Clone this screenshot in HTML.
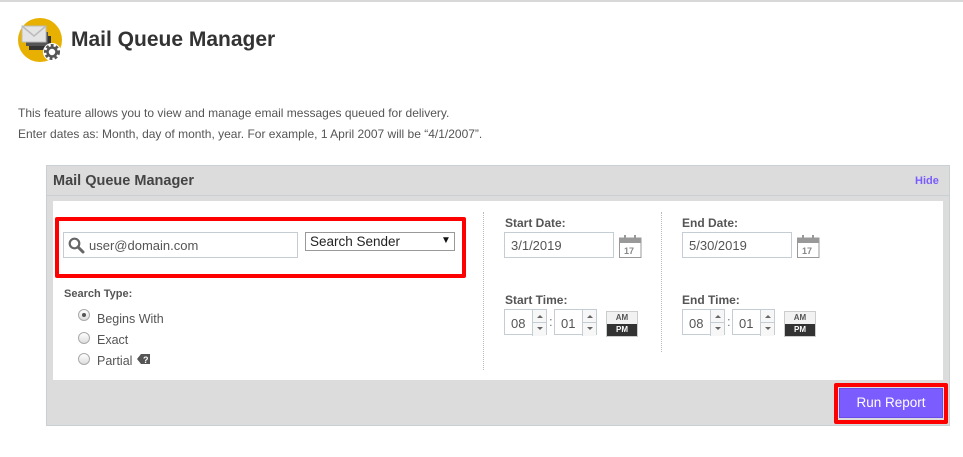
<!DOCTYPE html>
<html><head><meta charset="utf-8"><style>
*{box-sizing:border-box;margin:0;padding:0}
body{width:963px;height:457px;background:#fff;font-family:"Liberation Sans",Arial,sans-serif;position:relative;overflow:hidden;color:#444}
.a{position:absolute}
.lbl{font-size:12px;font-weight:bold;color:#555}
.inp{border:1px solid #c3cdd3;background:#fff;font-size:13px;color:#555}
.rad{width:12px;height:12px;border-radius:50%;border:1px solid #aaa;background:linear-gradient(#fff,#ddd)}
.rt{font-size:12.5px;color:#555}
.spin{border:1px solid #c3cdd3;background:#fff;height:26px}
.ar{border-left:1px solid #c3cdd3;width:14px;height:26px;right:0;top:0;position:absolute;background:#f7f7f7}
.ar:after{content:"";position:absolute;left:0;right:0;top:12px;border-top:1px solid #c3cdd3}
.up{position:absolute;left:4px;top:5px;border:3px solid transparent;border-bottom:3px solid #666;border-top:0}
.dn{position:absolute;left:4px;top:17px;border:3px solid transparent;border-top:3px solid #666;border-bottom:0}
</style></head><body>
<div class="a" style="left:0;top:0;width:963px;height:2px;background:#d8d8d8"></div>
<svg class="a" style="left:18px;top:16px" width="46" height="48" viewBox="0 0 46 48">
<circle cx="22" cy="24" r="22" fill="#e8b000"/>
<rect x="11" y="20" width="22" height="14" fill="#333"/>
<rect x="8" y="16" width="22" height="14" fill="#555"/>
<rect x="4" y="10" width="24" height="16" fill="#e4e4e4" stroke="#bbb"/>
<path d="M4 10 L16 20 L28 10" fill="none" stroke="#bbb" stroke-width="1.5"/>
<circle cx="34" cy="36" r="9" fill="#fff"/>
<circle cx="34" cy="36" r="6" fill="none" stroke="#555" stroke-width="4" stroke-dasharray="2.5 2"/>
<circle cx="34" cy="36" r="4.5" fill="none" stroke="#555" stroke-width="2.5"/>
</svg>
<div class="a" style="left:71px;top:28px;font-size:21px;font-weight:bold;color:#333">Mail Queue Manager</div>
<div class="a" style="left:18px;top:103px;font-size:12px;color:#555;line-height:21px">This feature allows you to view and manage email messages queued for delivery.<br>Enter dates as: Month, day of month, year. For example, 1 April 2007 will be “4/1/2007”.</div>

<div class="a" style="left:46px;top:165px;width:904px;height:261px;background:#dcdcdc;border:1px solid #c9d0d4"></div>
<div class="a" style="left:47px;top:195px;width:902px;height:1px;background:#c9d0d4"></div>
<div class="a" style="left:53px;top:173px;font-size:14.5px;font-weight:bold;color:#444">Mail Queue Manager</div>
<div class="a" style="left:915px;top:175px;font-size:11px;font-weight:bold;color:#7b5cff">Hide</div>
<div class="a" style="left:53px;top:201px;width:890px;height:179px;background:#fff"></div>

<div class="a" style="left:55px;top:217px;width:411px;height:61px;border:4px solid #f00;border-radius:2px"></div>
<div class="a inp" style="left:63px;top:232px;width:235px;height:26px"></div>
<svg class="a" style="left:68px;top:237px" width="17" height="17" viewBox="0 0 17 17"><circle cx="6.5" cy="6.5" r="4.8" fill="none" stroke="#666" stroke-width="2.2"/><path d="M10 10 L15 15" stroke="#666" stroke-width="3" stroke-linecap="round"/></svg>
<div class="a" style="left:89px;top:238px;font-size:13px;color:#555">user@domain.com</div>
<div class="a" style="left:305px;top:232px;width:150px;height:19px;border:1px solid #999;background:#fff"></div>
<div class="a" style="left:310px;top:234px;font-size:13.5px;color:#222">Search Sender</div>
<div class="a" style="left:441px;top:235px;font-size:10px;color:#111">▼</div>

<div class="a lbl" style="left:64px;top:288px;font-size:11px">Search Type:</div>
<div class="a rad" style="left:78px;top:309px"></div><div class="a" style="left:82px;top:313px;width:4px;height:4px;border-radius:50%;background:#555"></div>
<div class="a rt" style="left:97px;top:312px">Begins With</div>
<div class="a rad" style="left:78px;top:332px"></div><div class="a rt" style="left:97px;top:333px">Exact</div>
<div class="a rad" style="left:78px;top:353px"></div><div class="a rt" style="left:97px;top:354px">Partial</div>
<svg class="a" style="left:137px;top:353px" width="13" height="12" viewBox="0 0 13 12"><path d="M0 6 L4 1 H13 V11 H4 Z" fill="#555"/><text x="6" y="10" font-size="9" font-weight="bold" fill="#fff" font-family="Liberation Sans">?</text></svg>

<div class="a" style="left:483px;top:212px;height:158px;border-left:1px dotted #bbb"></div>
<div class="a" style="left:661px;top:212px;height:140px;border-left:1px dotted #bbb"></div>

<div class="a lbl" style="left:505px;top:216px">Start Date:</div>
<div class="a inp" style="left:504px;top:232px;width:110px;height:26px;padding:5px 0 0 6px">3/1/2019</div>
<div class="a lbl" style="left:682px;top:216px">End Date:</div>
<div class="a inp" style="left:682px;top:232px;width:110px;height:26px;padding:5px 0 0 6px">5/30/2019</div>
<svg class="a" style="left:619px;top:234px" width="23" height="24" viewBox="0 0 23 24"><rect x="0.5" y="4" width="21.5" height="19.5" fill="#fff" stroke="#999"/><rect x="0.5" y="4" width="21.5" height="5" fill="#999"/><rect x="5" y="1" width="2" height="5" fill="#999"/><rect x="15" y="1" width="2" height="5" fill="#999"/><text x="5" y="20" font-size="9" font-weight="bold" fill="#888" font-family="Liberation Sans">17</text></svg>
<svg class="a" style="left:797px;top:234px" width="23" height="24" viewBox="0 0 23 24"><rect x="0.5" y="4" width="21.5" height="19.5" fill="#fff" stroke="#999"/><rect x="0.5" y="4" width="21.5" height="5" fill="#999"/><rect x="5" y="1" width="2" height="5" fill="#999"/><rect x="15" y="1" width="2" height="5" fill="#999"/><text x="5" y="20" font-size="9" font-weight="bold" fill="#888" font-family="Liberation Sans">17</text></svg>

<div class="a lbl" style="left:505px;top:293px">Start Time:</div>
<div class="a lbl" style="left:682px;top:293px">End Time:</div>

<div class="a spin" style="left:504px;top:309px;width:43px"><span class="a" style="left:6px;top:6px;font-size:13px;color:#555">08</span><div class="ar"><i class="up"></i><i class="dn"></i></div></div>
<div class="a" style="left:549px;top:314px;font-size:13px;color:#777">:</div>
<div class="a spin" style="left:554px;top:309px;width:43px"><span class="a" style="left:6px;top:6px;font-size:13px;color:#555">01</span><div class="ar"><i class="up"></i><i class="dn"></i></div></div>
<div class="a" style="left:606px;top:311px;width:32px;height:26px;border:1px solid #ccc;background:#f2f2f2"><div style="font-size:8px;font-weight:bold;color:#555;text-align:center;height:12px;line-height:12px">AM</div><div style="height:12px;line-height:12px;background:#333;color:#fff;font-size:8px;font-weight:bold;text-align:center">PM</div></div>

<div class="a spin" style="left:682px;top:309px;width:43px"><span class="a" style="left:6px;top:6px;font-size:13px;color:#555">08</span><div class="ar"><i class="up"></i><i class="dn"></i></div></div>
<div class="a" style="left:727px;top:314px;font-size:13px;color:#777">:</div>
<div class="a spin" style="left:732px;top:309px;width:43px"><span class="a" style="left:6px;top:6px;font-size:13px;color:#555">01</span><div class="ar"><i class="up"></i><i class="dn"></i></div></div>
<div class="a" style="left:784px;top:311px;width:32px;height:26px;border:1px solid #ccc;background:#f2f2f2"><div style="font-size:8px;font-weight:bold;color:#555;text-align:center;height:12px;line-height:12px">AM</div><div style="height:12px;line-height:12px;background:#333;color:#fff;font-size:8px;font-weight:bold;text-align:center">PM</div></div>

<div class="a" style="left:834px;top:383px;width:114px;height:41px;border:4px solid #f00;border-radius:2px"></div>
<div class="a" style="left:839px;top:388px;width:104px;height:30px;background:#7b5cff;border:1px solid #6a4de8;color:#fff;font-size:13.5px;text-align:center;line-height:28px">Run Report</div>
</body></html>
